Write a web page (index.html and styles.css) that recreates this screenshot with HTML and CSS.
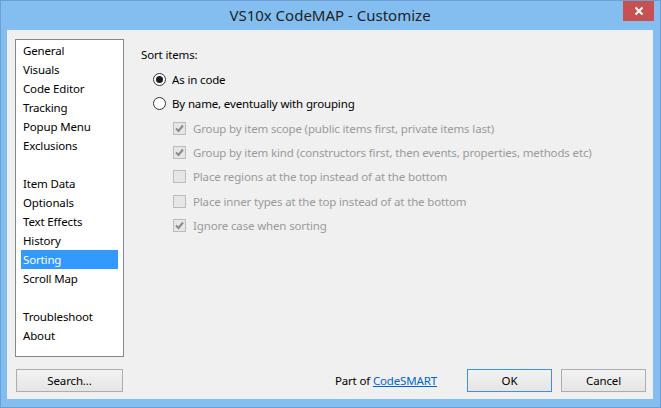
FILE: index.html
```html
<!DOCTYPE html>
<html>
<head>
    <title>VS10x CodeMAP - Customize</title>
    <meta charset="utf-8">
    <link rel="stylesheet" href="styles.css">
</head>
<body>

<div class="window">
    <div class="titlebar">
        <div></div>
        <div class="title">VS10x CodeMAP - Customize</div>
        <div class="close">
            <svg width="10" height="10" viewBox="0 0 10 10"><path d="M1.5 1.5 L8.5 8.5 M8.5 1.5 L1.5 8.5" stroke="#fff" stroke-width="2"/></svg>
        </div>
    </div>

    <div class="client">
        <div class="main">
            <div class="pages">
                <div class="page">General</div>
                <div class="page">Visuals</div>
                <div class="page">Code Editor</div>
                <div class="page">Tracking</div>
                <div class="page">Popup Menu</div>
                <div class="page">Exclusions</div>
                <div class="page"></div>
                <div class="page">Item Data</div>
                <div class="page">Optionals</div>
                <div class="page">Text Effects</div>
                <div class="page">History</div>
                <div class="page selected">Sorting</div>
                <div class="page">Scroll Map</div>
                <div class="page"></div>
                <div class="page">Troubleshoot</div>
                <div class="page">About</div>
            </div>

            <div class="panel">
                <div class="row">Sort items:</div>
                <div class="row option">
                    <span class="radio checked"></span>As in code
                </div>
                <div class="row option">
                    <span class="radio"></span>By name, eventually with grouping
                </div>
                <div class="row sub disabled">
                    <span class="check on"><svg width="11" height="11" viewBox="0 0 11 11"><path d="M2 5.5 L4.5 8 L9 2.5" fill="none" stroke="#8a8a8a" stroke-width="2"/></svg></span>Group by item scope (public items first, private items last)
                </div>
                <div class="row sub disabled">
                    <span class="check on"><svg width="11" height="11" viewBox="0 0 11 11"><path d="M2 5.5 L4.5 8 L9 2.5" fill="none" stroke="#8a8a8a" stroke-width="2"/></svg></span>Group by item kind (constructors first, then events, properties, methods etc)
                </div>
                <div class="row sub disabled">
                    <span class="check"></span>Place regions at the top instead of at the bottom
                </div>
                <div class="row sub disabled">
                    <span class="check"></span>Place inner types at the top instead of at the bottom
                </div>
                <div class="row sub disabled">
                    <span class="check on"><svg width="11" height="11" viewBox="0 0 11 11"><path d="M2 5.5 L4.5 8 L9 2.5" fill="none" stroke="#8a8a8a" stroke-width="2"/></svg></span>Ignore case when sorting
                </div>
            </div>
        </div>

        <div class="footer">
            <div class="button search">Search...</div>
            <div class="partof">Part of <a href="#">CodeSMART</a></div>
            <div class="button ok">OK</div>
            <div class="button cancel">Cancel</div>
        </div>
    </div>
</div>

</body>
</html>
```

FILE: styles.css
```css
body {
    margin: 0px;
    font: 11.5px "Noto Sans", sans-serif;
    letter-spacing: -0.15px;
    color: #000;
}

.window {
    width: 661px;
    height: 408px;
    box-sizing: border-box;
    background: #84bef1;
    border: 1px solid #6b9fd6;
    padding: 0px 7px 8px 6px;
    display: flex;
    flex-direction: column;
}

.titlebar {
    height: 29px;
    display: grid;
    grid-template-columns: 1fr auto 1fr;
}

.title {
    font-size: 15px;
    letter-spacing: 0px;
    color: #1e1e1e;
    line-height: 29px;
}

.close {
    justify-self: end;
    width: 31px;
    height: 20px;
    margin-right: -1px;
    background: #c75050;
    display: flex;
    align-items: center;
    justify-content: center;
}

.client {
    flex: 1;
    background: #f0f0f0;
    padding: 9px 7px 0px 8px;
    display: flex;
    flex-direction: column;
}

.main {
    display: flex;
    height: 318px;
}

.pages {
    width: 109px;
    height: 318px;
    box-sizing: border-box;
    border: 1px solid #828790;
    background: #fff;
    padding: 1px 5px;
}

.page {
    height: 19px;
    line-height: 19px;
    padding-left: 2px;
    white-space: nowrap;
}

.page.selected {
    background: #3399ff;
    color: #fff;
}

.panel {
    padding-left: 17px;
    padding-top: 3.8px;
}

.row {
    height: 24.4px;
    display: flex;
    align-items: center;
    white-space: nowrap;
}

.option {
    padding-left: 12px;
}

.sub {
    padding-left: 32px;
}

.disabled {
    color: #9a9a9a;
}

.radio {
    width: 13px;
    height: 13px;
    box-sizing: border-box;
    border: 1px solid #333;
    border-radius: 50%;
    background: #fff;
    margin-right: 6px;
    display: flex;
    align-items: center;
    justify-content: center;
}

.radio.checked::after {
    content: "";
    width: 7px;
    height: 7px;
    border-radius: 50%;
    background: #1c1c1c;
}

.check {
    width: 13px;
    height: 13px;
    box-sizing: border-box;
    border: 1px solid #bcbcbc;
    background: #e6e6e6;
    margin-right: 7px;
    display: flex;
    align-items: center;
    justify-content: center;
}

.footer {
    margin-top: 12px;
    height: 23px;
    display: flex;
    align-items: center;
}

.button {
    height: 23px;
    box-sizing: border-box;
    border: 1px solid #adadad;
    background: linear-gradient(#f2f2f2, #e5e5e5);
    text-align: center;
    line-height: 21px;
}

.search {
    width: 107px;
    margin-left: 1px;
}

.partof {
    margin-left: auto;
}

.partof a {
    color: #0066cc;
}

.ok {
    width: 85px;
    margin-left: 30px;
    border-color: #3c8fe6;
}

.cancel {
    width: 85px;
    margin-left: 9px;
}
```
